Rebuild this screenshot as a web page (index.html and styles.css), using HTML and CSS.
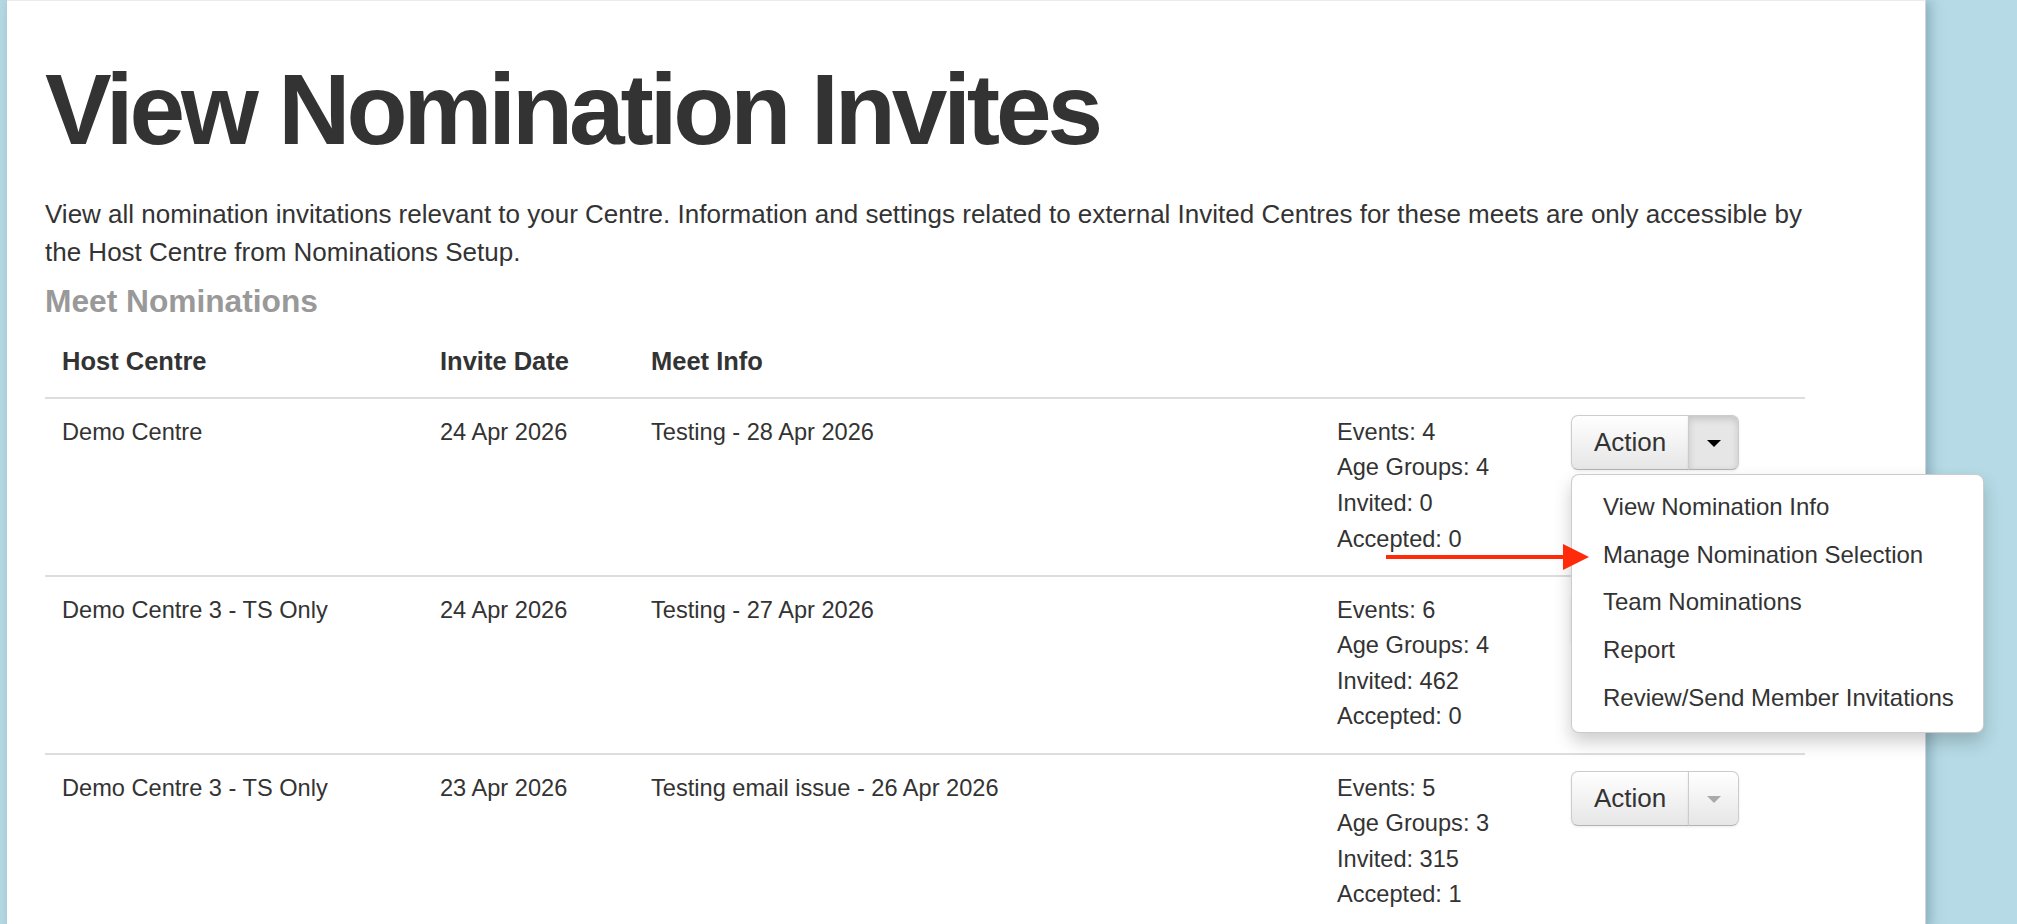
FILE: index.html
```html
<!DOCTYPE html>
<html lang="en">
<head>
<meta charset="utf-8">
<title>View Nomination Invites</title>
<link rel="stylesheet" href="styles.css">
</head>
<body>
<div class="page">
  <h1 class="title">View Nomination Invites</h1>
  <p class="intro">View all nomination invitations relevant to your Centre. Information and settings related to external Invited Centres for these meets are only accessible by the Host Centre from Nominations Setup.</p>
  <h3 class="section">Meet Nominations</h3>
  <table class="noms">
    <colgroup>
      <col class="c-host">
      <col class="c-date">
      <col class="c-info">
      <col class="c-stats">
      <col class="c-action">
    </colgroup>
    <thead>
      <tr><th>Host Centre</th><th>Invite Date</th><th>Meet Info</th><th></th><th></th></tr>
    </thead>
    <tbody>
      <tr>
        <td>Demo Centre</td>
        <td>24 Apr 2026</td>
        <td>Testing - 28 Apr 2026</td>
        <td><div>Events: 4</div><div>Age Groups: 4</div><div>Invited: 0</div><div>Accepted: 0</div></td>
        <td>
          <div class="btn-group open">
            <button class="btn">Action</button>
            <button class="btn btn-caret active"><span class="caret"></span></button>
            <ul class="menu">
              <li>View Nomination Info</li>
              <li>Manage Nomination Selection</li>
              <li>Team Nominations</li>
              <li>Report</li>
              <li>Review/Send Member Invitations</li>
            </ul>
          </div>
        </td>
      </tr>
      <tr>
        <td>Demo Centre 3 - TS Only</td>
        <td>24 Apr 2026</td>
        <td>Testing - 27 Apr 2026</td>
        <td><div>Events: 6</div><div>Age Groups: 4</div><div>Invited: 462</div><div>Accepted: 0</div></td>
        <td>
          <div class="btn-group covered">
            <button class="btn"><span class="btn-label">Action</span></button>
            <button class="btn btn-caret"><span class="caret"></span></button>
          </div>
        </td>
      </tr>
      <tr>
        <td>Demo Centre 3 - TS Only</td>
        <td>23 Apr 2026</td>
        <td>Testing email issue - 26 Apr 2026</td>
        <td><div>Events: 5</div><div>Age Groups: 3</div><div>Invited: 315</div><div>Accepted: 1</div></td>
        <td>
          <div class="btn-group">
            <button class="btn">Action</button>
            <button class="btn btn-caret"><span class="caret"></span></button>
          </div>
        </td>
      </tr>
    </tbody>
  </table>
  <svg class="arrow" width="210" height="28" viewBox="0 0 210 28" aria-hidden="true">
    <rect x="0" y="12" width="180" height="4" fill="#ff2a0a"/>
    <polygon points="177,1 203,14 177,27" fill="#ff2a0a"/>
  </svg>
</div>
</body>
</html>
```

FILE: styles.css
```css
html, body {
  margin: 0;
  height: 100%;
  overflow: hidden;
}

body {
  background: #b6dbe6;
  font-family: "Liberation Sans", Arial, Helvetica, sans-serif;
  color: #333;
}

.page {
  position: relative;
  box-sizing: border-box;
  margin-left: 7px;
  width: 1919px;
  min-height: 100%;
  padding: 53px 0 0 38px;
  background: #fff;
  border-top: 1px solid #ececec;
  border-right: 1px solid #cfd6d9;
  box-shadow: 4px 0 12px rgba(40, 80, 100, 0.35);
}

.title {
  margin: 0;
  font-size: 100px;
  line-height: 110px;
  font-weight: bold;
  letter-spacing: -4.1px;
  color: #333;
}

.intro {
  margin: 30.7px 0 0;
  width: 1768px;
  font-size: 26px;
  line-height: 38.5px;
}

.section {
  margin: 11px 0 0;
  font-size: 31.7px;
  line-height: 36px;
  font-weight: bold;
  color: #999;
}

.noms {
  margin-top: 9px;
  width: 1760px;
  table-layout: fixed;
  border-collapse: separate;
  border-spacing: 0;
}

.c-host { width: 378px; }
.c-date { width: 211px; }
.c-info { width: 686px; }
.c-stats { width: 234px; }
.c-action { width: 251px; }

.noms th {
  padding: 16px 17px 17.5px;
  font-size: 25.5px;
  line-height: 35.6px;
  font-weight: bold;
  text-align: left;
  vertical-align: bottom;
}

.noms td {
  padding: 16px 17px 17.5px;
  border-top: 2px solid #dddddd;
  font-size: 23.6px;
  line-height: 35.6px;
  vertical-align: top;
  white-space: nowrap;
}

.btn-group {
  position: relative;
  display: inline-flex;
  vertical-align: top;
}

.btn {
  display: inline-flex;
  align-items: center;
  margin: 0;
  padding: 8.5px 22px;
  font-family: "Liberation Sans", Arial, Helvetica, sans-serif;
  font-size: 26px;
  line-height: 36px;
  color: #333;
  background: linear-gradient(#ffffff, #e6e6e6);
  border: 1px solid #cccccc;
  border-bottom-color: #b3b3b3;
  border-radius: 7px 0 0 7px;
  box-shadow: inset 0 1px 0 rgba(255, 255, 255, 0.2), 0 1px 3px rgba(0, 0, 0, 0.08);
}

/* the button of row 2 lies under the open menu: its label is not seen */
.covered .btn-label {
  visibility: hidden;
}

.btn-caret {
  margin-left: -1px;
  padding: 8.5px 17.5px;
  border-radius: 0 7px 7px 0;
}

.btn-caret.active {
  background: #e6e6e6;
  box-shadow: inset 0 3px 7px rgba(0, 0, 0, 0.15), 0 1px 3px rgba(0, 0, 0, 0.08);
}

.caret {
  display: inline-block;
  width: 0;
  height: 0;
  margin-top: 2px;
  border-top: 7px solid #000;
  border-left: 7px solid transparent;
  border-right: 7px solid transparent;
  opacity: 0.3;
}

.open .caret {
  opacity: 1;
}

.menu {
  position: absolute;
  top: calc(100% + 4px);
  left: 0;
  z-index: 10;
  box-sizing: border-box;
  width: 413px;
  margin: 0;
  padding: 8px 0 10px;
  list-style: none;
  background: #fff;
  border: 1px solid rgba(0, 0, 0, 0.2);
  border-radius: 8px;
  box-shadow: 0 9px 18px rgba(0, 0, 0, 0.2);
}

.menu li {
  padding: 0 31px;
  font-size: 24px;
  line-height: 47.75px;
  color: #333;
  white-space: nowrap;
}

.arrow {
  position: absolute;
  left: 1379px;
  top: 542px;
  z-index: 20;
}
```
